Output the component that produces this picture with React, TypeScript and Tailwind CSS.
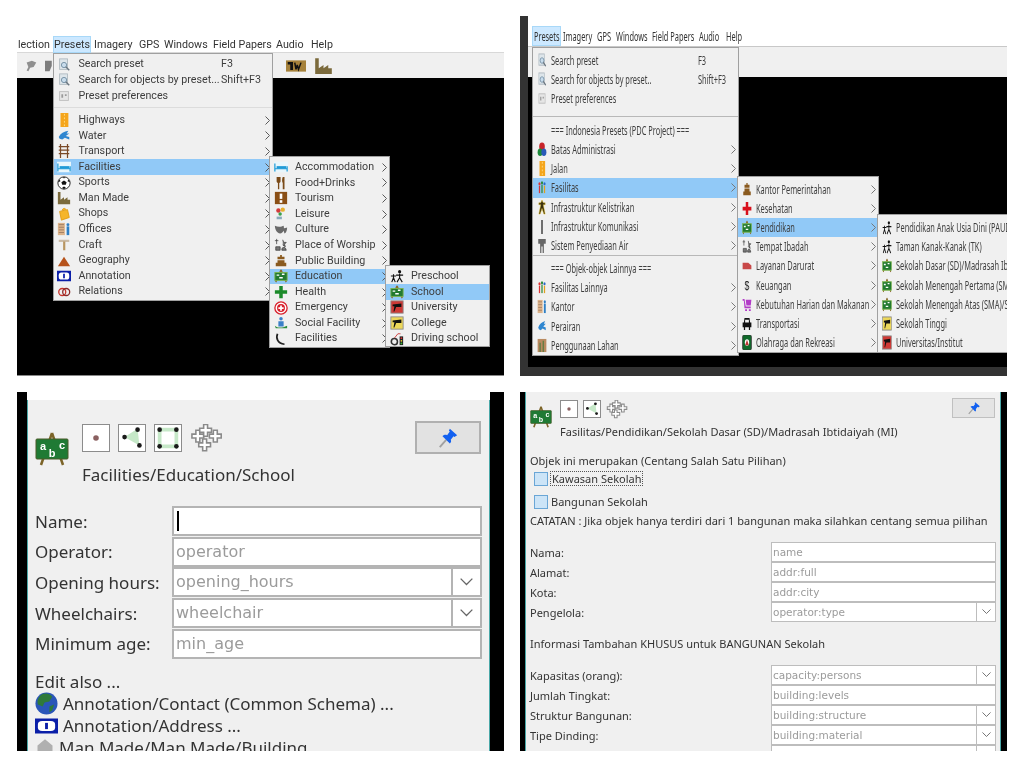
import React from "react";

const B = "#1a1a1a";
const G: Record<string, React.ReactNode> = {
  search: (<g><rect x="3" y="1" width="9" height="12" fill="#dde5ea" stroke="#aeb8bf" /><circle cx="8" cy="8" r="3" fill="#c8dcec" stroke="#6f8ba0" /><path d="M10 10l4 4" stroke="#6b7680" strokeWidth="1.6" /></g>),
  pref: (<g><rect x="3" y="3" width="10" height="10" fill="#e6e6e6" stroke="#bcbcbc" /><path d="M5 6h2v4H5zM9 6h2v2H9z" fill="#9a9a9a" /></g>),
  highway: (<g><rect x="4" y="0" width="9" height="16" fill="#f5a51c" /><path d="M8.5 1v14" stroke="#ffe08a" strokeDasharray="2 2" /></g>),
  water: (<path d="M2 9C4 5 8 3 13 2l-2 3 3 0-4 3 4 1v3l-5-2-3 2-3-1z" fill="#2f86d0" />),
  transport: (<path d="M4 0v16M12 0v16M2 3h12M2 7h12M2 11h12" stroke="#7a4a28" strokeWidth="1.4" fill="none" />),
  bed: (<g><rect x="0" y="2" width="16" height="12" fill="#e8f6fc" /><path d="M1 4v9M15 7v6M1 10h14" stroke="#1f9ad6" strokeWidth="1.4" /><rect x="3" y="7" width="11" height="3" fill="#1f9ad6" /></g>),
  soccer: (<g><circle cx="8" cy="8" r="7" fill="#fff" stroke="#111" /><path d="M8 5l3 2-1 3H6L5 7zM1 7l2-3 1 2zM15 7l-2-3-1 2zM6 13l2 2 2-2-2-1zM7 1h2l-1 2z" fill="#111" /></g>),
  factory: (<path d="M1 1h3v9l4-3v3l4-3v3h3v5H1z" fill="#7b6a3c" />),
  shop: (<path d="M3 5l9-2 2 9-9 3zM6 4c0-3 4-3 4-1" fill="#f5b52a" stroke="#e09a10" />),
  offices: (<g><rect x="1" y="1" width="8" height="14" fill="#dcb38a" /><path d="M2 3h6M2 6h6M2 9h6M2 12h6" stroke="#9d7a60" /><circle cx="12.500" cy="3" r="1.700" fill="#2e7fc4" /><rect x="11" y="5" width="3" height="10" fill="#2e7fc4" /></g>),
  craft: (<g><rect x="2" y="2" width="12" height="2.500" fill="#c9b9a4" /><rect x="7" y="4" width="2.500" height="10" fill="#b89560" /></g>),
  triangle: (<polygon points="8,3 15,14 1,14" fill="#b6521a" />),
  annotation: (<g><rect x="0" y="2" width="16" height="12" fill="#0b1fa8" /><rect x="2" y="4" width="12" height="8" rx="3" fill="#fff" /><path d="M7 5.500h2v5H7z" fill="#0b1fa8" /></g>),
  relations: (<g><circle cx="6" cy="8" r="4" fill="none" stroke="#c8342a" strokeWidth="1.500" /><circle cx="10.500" cy="8" r="4" fill="none" stroke="#8a2a2a" strokeWidth="1.500" /></g>),
  fork: (<path d="M3 1v5c0 1 1 2 1.500 2v7h1.500V8c.5 0 1.500-1 1.500-2V1M10 1c-1 2-1 6 0 7v7h2V1z" fill="#7a4a18" />),
  tourism: (<g><rect x="1" y="1" width="14" height="14" fill="#8a4f16" /><rect x="6.500" y="3" width="3" height="6" fill="#fff" /><rect x="6.500" y="10.500" width="3" height="3" fill="#fff" /></g>),
  leisure: (<g><circle cx="5" cy="4" r="2.500" fill="#d23b3b" /><circle cx="10" cy="3" r="2.500" fill="#e8b030" /><circle cx="7" cy="8" r="2" fill="#39a04a" /><rect x="3" y="11" width="6" height="3" fill="#8ab" /></g>),
  culture: (<path d="M1 3c4 2 8 1 10 0 1 4 0 8-4 9C3 11 1 7 1 3zM10 6c2 0 4-1 5-1 0 3-1 6-3 7" fill="#6a6a6a" />),
  worship: (<path d="M3 1v6M1 3h4M10 2l1 3h3l-2 2 1 3-3-2M2 10h5v4H2zM9 12c2-2 4-2 5 2H9z" stroke="#333" fill="#777" strokeWidth="0.800" />),
  publicb: (<path d="M7 1h2v2h3v3H4V3h3zM4 7h8v3h2v4H2v-4h2z" fill="#8a5a1e" />),
  school: (<g><path d="M8 1L2 15M8 1l6 14" stroke="#8a6a2a" strokeWidth="1.500" /><rect x="1" y="4" width="14" height="9" fill="#227a30" stroke="#7bb34a" /><path d="M3 7h3M9 6h3M6 10h4" stroke="#fff" strokeWidth="1.500" /></g>),
  health: (<path d="M6 1h4v5h5v4h-5v5H6v-5H1V6h5z" fill="#1b8a2a" />),
  redcross: (<path d="M6 1h4v5h5v4h-5v5H6v-5H1V6h5z" fill="#d8101c" />),
  emergency: (<g><circle cx="8" cy="8" r="7" fill="#fff" stroke="#d8202c" strokeWidth="1.500" /><circle cx="8" cy="8" r="4.500" fill="#d8202c" /><path d="M7 5h2v2h2v2H9v2H7V9H5V7h2z" fill="#fff" /></g>),
  social: (<g><circle cx="8" cy="3" r="2" fill="#3a80c8" /><path d="M5 6h6v6H5z" fill="#3a80c8" /><path d="M1 11c3 3 8 3 14 0v3H2z" fill="#2a8a3a" /></g>),
  phone: (<path d="M4 2c-2 5 0 11 8 12" stroke="#222" strokeWidth="2" fill="none" />),
  preschool: (<g><circle cx="11" cy="3" r="1.800" fill="#111" /><path d="M11 5v5M11 10l-3 5M11 10l3 5M7 7h8M4 6v4M4 10l-2 5M4 10l2 5M1 8h6" stroke="#111" strokeWidth="1.300" fill="none" /></g>),
  university: (<g><rect x="1" y="1" width="14" height="14" fill="#cf3a36" stroke="#888" /><path d="M3 5l10-1v4H7l-2 5H4l1-6H3z" fill="#111" /></g>),
  college: (<g><rect x="1" y="1" width="14" height="14" fill="#ecd75a" stroke="#888" /><path d="M3 5l10-1v4H7l-2 5H4l1-6H3z" fill="#111" /></g>),
  driving: (<g><circle cx="5" cy="11" r="3.500" fill="none" stroke="#333" strokeWidth="1.800" /><rect x="11" y="5" width="4" height="10" fill="#222" /><circle cx="13" cy="7" r="1" fill="#d33" /><circle cx="13" cy="10" r="1" fill="#ec3" /><circle cx="13" cy="13" r="1" fill="#3b3" /><path d="M5 7l4-5h3" stroke="#c33" fill="none" /></g>),
  batas: (<g><circle cx="8" cy="5" r="4.500" fill="#c8242a" /><circle cx="5" cy="11" r="4" fill="#1d8a3a" /><circle cx="11" cy="11" r="4" fill="#2a5ab8" /></g>),
  people: (<g><circle cx="4" cy="4" r="1.700" fill="#d33" /><rect x="3" y="6" width="2" height="8" fill="#d33" /><circle cx="8" cy="3" r="1.700" fill="#2a8a3a" /><rect x="7" y="5" width="2" height="9" fill="#2a8a3a" /><circle cx="12" cy="4" r="1.700" fill="#2a6ac8" /><rect x="11" y="6" width="2" height="8" fill="#e0a020" /></g>),
  power: (<path d="M8 0l2 3h3v2h-3l3 10h-2L8 9l-3 6H3L6 5H3V3h3z" fill="#3a3010" stroke="#e8c020" strokeWidth="0.600" />),
  comm: (<path d="M7 1h2v15H7z" fill="#222" />),
  tower: (<path d="M2 1h12v5h-3v10H9V9H7v7H5V6H2z" fill="#666" />),
  land: (<g><rect x="1" y="1" width="14" height="14" fill="#b98a60" /><path d="M4 5h2v10H4zM9 3h2v12H9z" fill="#5a7a40" /></g>),
  layanan: (<path d="M1 5h9l5 3v4H1z" fill="#c84848" />),
  dollar: (<text x="8" y="13" textAnchor="middle" fontSize="14" fill="#222" fontFamily="Liberation Sans">$</text>),
  cart: (<path d="M1 2h3l2 8h8v2H4L3 4H1zM6 3h9l-1 6H7zM5 13h3v2H5zM11 13h3v2h-3z" fill="#b23bc8" />),
  car: (<path d="M4 2h8l1 5h2v5h-2v3h-2v-3H5v3H3v-3H1V7h2zM5 4v3h6V4z" fill="#111" />),
  sport: (<g><rect x="1" y="0" width="14" height="16" rx="2" fill="#0f6a2a" stroke="#333" /><circle cx="8" cy="8" r="3.500" fill="#fff" /><path d="M8 5l3 6H5z" fill="#b33" /></g>),
  gray1: (<path d="M3 4l6-2 5 2-3 5-4 1-2 4-2-1 2-4z" fill="#8f8f8f" />),
  gray2: (<path d="M4 2h9v6l-3 6H4z" fill="#7d7d7d" />),
  tw: (<g><rect x="0" y="3" width="16" height="10" fill="#a5813b" /><path d="M2 5h3v6H4V6H2zM7 5l1 6 1-4 1 4 2-6" stroke="#111" strokeWidth="1.200" fill="none" /></g>),
};

function Ico({ n, w = 16, h = 16 }: { n: string; w?: number; h?: number }) {
  return (
    <svg viewBox="0 0 16 16" width={w} height={h} preserveAspectRatio="none" className="shrink-0">
      {G[n]}
    </svg>
  );
}

function Chevron({ color = "#5a5a5a" }: { color?: string }) {
  return (
    <svg width="5" height="9" viewBox="0 0 5 9" className="shrink-0">
      <path d="M.5.5l4 4-4 4" stroke={color} fill="none" />
    </svg>
  );
}

type Row = { i?: string; t: string; s?: string; a?: boolean; on?: boolean; sep?: boolean };

function MenuA({ rows }: { rows: Row[] }) {
  return (
    <>
      {rows.map((r, k) =>
        r.sep ? (
          <div key={k} className="h-[8.7px] pt-[3.5px]">
            <div className="h-px bg-[#dcdcdc]" />
          </div>
        ) : (
          <div key={k} className={`flex h-[15.6px] items-center pr-[2px] ${r.on ? "bg-[#91c9f7]" : ""}`}>
            <div className="flex w-[25px] shrink-0 justify-center pr-[4px]">{r.i && <Ico n={r.i} w={14} h={14} />}</div>
            <span className="min-w-0 flex-1 whitespace-nowrap">{r.t}</span>
            {r.s && <span className="w-[49px] shrink-0">{r.s}</span>}
            {r.a && <Chevron />}
          </div>
        )
      )}
    </>
  );
}

function MenuB({ rows, h }: { rows: Row[]; h: string }) {
  return (
    <>
      {rows.map((r, k) =>
        r.sep ? (
          <div key={k} className={r.t === "s" ? "h-[3px]" : "h-[12px] pt-[8px]"}>
            <div className="h-px bg-[#b8b8b8]" />
          </div>
        ) : (
          <div key={k} className={`flex ${h} items-center pr-[2px] ${r.on ? "bg-[#91c9f7]" : ""}`}>
            <div className="flex w-[18px] shrink-0 justify-center">{r.i && <Ico n={r.i} w={10} h={15} />}</div>
            <span className="min-w-0 flex-1 whitespace-nowrap"><span className="inline-block origin-left scale-x-[0.57]">{r.t}</span></span>
            {r.s && <span className="w-[38px] shrink-0"><span className="inline-block origin-left scale-x-[0.57] whitespace-nowrap">{r.s}</span></span>}
            {r.a && <Chevron color="#777" />}
          </div>
        )
      )}
    </>
  );
}

const panelMenu = "absolute border border-[#a0a0a0] bg-[#f0f0f0] leading-none text-[#3d3d3d]";

function TopLeft() {
  const bar = [["Imagery", "w-[39px] ml-[3px]"], ["GPS", "w-[19px] ml-[6px]"], ["Windows", "w-[43px] ml-[6px]"], ["Field Papers", "w-[57px] ml-[6px]"], ["Audio", "w-[29px] ml-[6px]"], ["Help", "w-[24px] ml-[6px]"]];
  return (
    <div className="relative flex h-[340px] w-[487px] flex-col overflow-hidden font-['Roboto',sans-serif] text-[10.7px]">
      <div className="flex h-[17px] shrink-0 items-center border-b border-[#d8d8d8] text-[#333]">
        <span className="w-[36px] pl-px pt-[3px]">lection</span>
        <span className="flex h-[17px] w-[38px] items-center justify-center border border-[#a8d8f8] bg-[#cce8ff] pt-[3px]">Presets</span>
        {bar.map(([t, w]) => (
          <span key={t} className={`whitespace-nowrap pt-[3px] ${w}`}>{t}</span>
        ))}
      </div>
      <div className="flex h-[25px] shrink-0 items-center gap-[4px] bg-[#f0f0f0] pl-[7px]">
        <Ico n="gray1" w={14} h={14} />
        <Ico n="gray2" w={12} h={14} />
        <div className="ml-[228px]"><Ico n="tw" w={20} h={18} /></div>
        <div className="ml-[4px]"><Ico n="factory" w={19} h={18} /></div>
      </div>
      <div className="flex-1 border-b border-[#888] bg-black" />

      <div className={`${panelMenu} left-[35.5px] top-[17px] w-[220.5px] pt-[3px]`}>
        <MenuA
          rows={[
            { i: "search", t: "Search preset", s: "F3" },
            { i: "search", t: "Search for objects by preset...", s: "Shift+F3" },
            { i: "pref", t: "Preset preferences" },
            { sep: true, t: "" },
            { i: "highway", t: "Highways", a: true },
            { i: "water", t: "Water", a: true },
            { i: "transport", t: "Transport", a: true },
            { i: "bed", t: "Facilities", a: true, on: true },
            { i: "soccer", t: "Sports", a: true },
            { i: "factory", t: "Man Made", a: true },
            { i: "shop", t: "Shops", a: true },
            { i: "offices", t: "Offices", a: true },
            { i: "craft", t: "Craft", a: true },
            { i: "triangle", t: "Geography", a: true },
            { i: "annotation", t: "Annotation", a: true },
            { i: "relations", t: "Relations", a: true },
          ]}
        />
      </div>
      <div className={`${panelMenu} left-[252px] top-[120px] w-[121px] pt-[2.5px]`}>
        <MenuA
          rows={[
            { i: "bed", t: "Accommodation", a: true },
            { i: "fork", t: "Food+Drinks", a: true },
            { i: "tourism", t: "Tourism", a: true },
            { i: "leisure", t: "Leisure", a: true },
            { i: "culture", t: "Culture", a: true },
            { i: "worship", t: "Place of Worship", a: true },
            { i: "publicb", t: "Public Building", a: true },
            { i: "school", t: "Education", a: true, on: true },
            { i: "health", t: "Health", a: true },
            { i: "emergency", t: "Emergency", a: true },
            { i: "social", t: "Social Facility", a: true },
            { i: "phone", t: "Facilities", a: true },
          ]}
        />
      </div>
      <div className={`${panelMenu} left-[368px] top-[229px] w-[105px] pt-[2.5px]`}>
        <MenuA
          rows={[
            { i: "preschool", t: "Preschool" },
            { i: "school", t: "School", on: true },
            { i: "university", t: "University" },
            { i: "college", t: "College" },
            { i: "driving", t: "Driving school" },
          ]}
        />
      </div>
    </div>
  );
}

function TopRight() {
  const bar = [["Presets", "w-[29px]"], ["Imagery", "w-[34px]"], ["GPS", "w-[19px]"], ["Windows", "w-[36px]"], ["Field Papers", "w-[47px]"], ["Audio", "w-[27px]"], ["Help", "w-[20px]"]];
  return (
    <div className="relative flex h-[360px] w-[487px] overflow-hidden font-['Noto_Sans',sans-serif] text-[13px]">
      <div className="w-[8px] shrink-0 bg-[#333]" />
      <div className="flex min-w-0 flex-1 flex-col">
        <div className="h-[10px] shrink-0" />
        <div className="flex h-[21px] shrink-0 items-center border-b border-[#c8c8c8] pl-[4px] text-[#333]">
          {bar.map(([t, w], k) => (
            <span key={t} className={`flex h-full items-center pt-[2px] ${w} ${k === 0 ? "border border-[#a8d8f8] bg-[#cce8ff] pl-[1px]" : "pl-[2px]"}`}>
              <span className="inline-block origin-left scale-x-[0.57] whitespace-nowrap">{t}</span>
            </span>
          ))}
        </div>
        <div className="h-[30px] shrink-0 bg-[#f0f0f0]" />
        <div className="flex-1 bg-black" />
        <div className="h-[9px] shrink-0 bg-[#333]" />
      </div>

      <div className={`${panelMenu} left-[12px] top-[31px] w-[207px] pt-[2.5px]`}>
        <MenuB
          h="h-[19.3px]"
          rows={[
            { i: "search", t: "Search preset", s: "F3" },
            { i: "search", t: "Search for objects by preset..", s: "Shift+F3" },
            { i: "pref", t: "Preset preferences" },
            { sep: true, t: "" },
            { t: "=== Indonesia Presets (PDC Project) ===" },
            { i: "batas", t: "Batas Administrasi", a: true },
            { i: "highway", t: "Jalan", a: true },
            { i: "people", t: "Fasilitas", a: true, on: true },
            { i: "power", t: "Infrastruktur Kelistrikan", a: true },
            { i: "comm", t: "Infrastruktur Komunikasi", a: true },
            { i: "tower", t: "Sistem Penyediaan Air", a: true },
            { sep: true, t: "s" },
            { t: "=== Objek-objek Lainnya ===" },
            { i: "people", t: "Fasilitas Lainnya", a: true },
            { i: "offices", t: "Kantor", a: true },
            { i: "water", t: "Perairan", a: true },
            { i: "land", t: "Penggunaan Lahan", a: true },
          ]}
        />
      </div>
      <div className={`${panelMenu} left-[217px] top-[160px] w-[142px] pt-[3px]`}>
        <MenuB
          h="h-[19.1px]"
          rows={[
            { i: "publicb", t: "Kantor Pemerintahan", a: true },
            { i: "redcross", t: "Kesehatan", a: true },
            { i: "school", t: "Pendidikan", a: true, on: true },
            { i: "worship", t: "Tempat Ibadah", a: true },
            { i: "layanan", t: "Layanan Darurat", a: true },
            { i: "dollar", t: "Keuangan", a: true },
            { i: "cart", t: "Kebutuhan Harian dan Makanan", a: true },
            { i: "car", t: "Transportasi", a: true },
            { i: "sport", t: "Olahraga dan Rekreasi", a: true },
          ]}
        />
      </div>
      <div className={`${panelMenu} left-[357px] top-[198px] w-[180px] pt-[3px]`}>
        <MenuB
          h="h-[19.2px]"
          rows={[
            { i: "preschool", t: "Pendidikan Anak Usia Dini (PAUD)" },
            { i: "preschool", t: "Taman Kanak-Kanak (TK)" },
            { i: "school", t: "Sekolah Dasar (SD)/Madrasah Ibtidaiyah (MI)" },
            { i: "school", t: "Sekolah Menengah Pertama (SMP)" },
            { i: "school", t: "Sekolah Menengah Atas (SMA)/SMK" },
            { i: "college", t: "Sekolah Tinggi" },
            { i: "university", t: "Universitas/Institut" },
          ]}
        />
      </div>
    </div>
  );
}

function Easel({ w, h }: { w: number; h: number }) {
  return (
    <svg viewBox="0 0 34 34" width={w} height={h} className="shrink-0">
      <path d="M17 1L6 33M17 1l11 32" stroke="#7c6428" strokeWidth="2.500" />
      <rect x="1" y="7" width="32" height="20" rx="1" fill="#1f7a34" stroke="#4a5a28" />
      <text x="8" y="18" fontSize="11" fontWeight="700" fill="#fff" textAnchor="middle" fontFamily="Liberation Sans">a</text>
      <text x="17" y="25" fontSize="11" fontWeight="700" fill="#fff" textAnchor="middle" fontFamily="Liberation Sans">b</text>
      <text x="27" y="17" fontSize="11" fontWeight="700" fill="#fff" textAnchor="middle" fontFamily="Liberation Sans">c</text>
    </svg>
  );
}

function NodeBox({ s }: { s: string }) {
  return (
    <div className={`flex ${s} shrink-0 items-center justify-center border border-[#8c8c8c] bg-white`}>
      <svg viewBox="0 0 28 28" className="h-full w-full"><circle cx="14" cy="14" r="3" fill="#8a6060" /></svg>
    </div>
  );
}
function WayBox({ s }: { s: string }) {
  return (
    <div className={`${s} shrink-0 border border-[#8c8c8c] bg-white`}>
      <svg viewBox="0 0 28 28" className="h-full w-full">
        <polygon points="6,13 20,4 22,22" fill="#c6e8c8" />
        <circle cx="6" cy="13" r="2.500" fill={B} /><circle cx="20" cy="5" r="2.500" fill={B} /><circle cx="22" cy="22" r="2.500" fill={B} />
      </svg>
    </div>
  );
}
function AreaBox({ s }: { s: string }) {
  return (
    <div className={`${s} shrink-0 border border-[#8c8c8c] bg-white`}>
      <svg viewBox="0 0 28 28" className="h-full w-full">
        <rect x="5" y="5" width="18" height="18" fill="none" stroke="#c6e8c8" strokeWidth="4" />
        <circle cx="5" cy="5" r="2.500" fill={B} /><circle cx="23" cy="5" r="2.500" fill={B} /><circle cx="5" cy="23" r="2.500" fill={B} /><circle cx="23" cy="23" r="2.500" fill={B} />
      </svg>
    </div>
  );
}
function RelIcon({ w, h }: { w: number; h: number }) {
  const p = "M0 0h3v-3h3v3h3v3H6v3H3V3H0z";
  return (
    <svg viewBox="0 0 34 30" width={w} height={h} className="shrink-0">
      <g fill="#fff" stroke="#8a8a8a" strokeWidth="1.200">
        <path d={p} transform="translate(2 10) scale(1.350)" />
        <path d={p} transform="translate(10 4) scale(1.350)" />
        <path d={p} transform="translate(20 10) scale(1.350)" />
        <path d={p} transform="translate(9 19) scale(1.350)" />
      </g>
    </svg>
  );
}
function Pin({ s }: { s: number }) {
  return (
    <svg viewBox="0 0 24 24" width={s} height={s}>
      <path d="M3 22l7-8" stroke="#a0a0a0" strokeWidth="2" />
      <path d="M14 2l8 7-3 2-1-1-3 4c1 2 0 3-1 4L6 10c1-1 3-2 5-1l3-4-1-1z" fill="#1260f0" />
    </svg>
  );
}

function Globe() {
  return (
    <svg viewBox="0 0 24 24" width="23" height="23" className="shrink-0">
      <circle cx="12" cy="12" r="11.500" fill="#2a56b8" />
      <path d="M6 3c4-2 9-2 12 2l-3 5-5 1-2 4-5-2c-1-4 0-7 3-10zM15 15l5-2-2 6-3 2z" fill="#2f7a3a" />
    </svg>
  );
}

function Chev({ w = 12, c = "#666" }: { w?: number; c?: string }) {
  return (
    <svg width={w} height={w * 0.6} viewBox="0 0 10 6">
      <path d="M.5.5L5 5l4.500-4.500" stroke={c} fill="none" />
    </svg>
  );
}

function BigField({ label, ph, combo, cursor }: { label: string; ph?: string; combo?: boolean; cursor?: boolean }) {
  return (
    <>
      <div className="flex items-center text-[#333]">{label}</div>
      <div className="flex h-[30px] border-2 border-[#b4b4b4] bg-white font-['DejaVu_Sans',sans-serif] text-[16px] text-[#9b9b9b]">
        <div className="flex min-w-0 flex-1 items-center px-[2px]">
          {cursor ? <div className="ml-[1px] h-[20px] w-[2px] bg-black" /> : ph}
        </div>
        {combo && (
          <div className="flex w-[29px] items-center justify-center border-l-2 border-[#b4b4b4]"><Chev w={13} /></div>
        )}
      </div>
    </>
  );
}

function BottomLeft() {
  return (
    <div className="flex h-[359px] w-[487px] overflow-hidden font-['Noto_Sans',sans-serif]">
      <div className="w-[10px] shrink-0 bg-black" />
      <div className="flex min-w-0 flex-1 flex-col">
        <div className="h-[8px] shrink-0 bg-white" />
        <div className="flex-1 border-x border-[#4aa8a8] bg-[#f0f0f0] pl-[7px] pr-[8px] text-[17px] leading-none">
          <div className="flex pt-[21px]">
            <div className="mt-[11px]"><Easel w={34} h={34} /></div>
            <div className="ml-[13px] flex flex-col">
              <div className="mt-[3px] flex items-start gap-[8px]">
                <NodeBox s="h-[28px] w-[28px]" />
                <WayBox s="h-[28px] w-[28px]" />
                <AreaBox s="h-[28px] w-[28px]" />
                <RelIcon w={33} h={30} />
              </div>
              <div className="mt-[12px] h-[20px] whitespace-nowrap text-[#333]">Facilities/Education/School</div>
            </div>
            <div className="ml-auto flex h-[33px] w-[66px] items-center justify-center border-2 border-[#b0b0b0] bg-[#e2e2e2]"><Pin s={22} /></div>
          </div>
          <div className="mt-[20px] grid grid-cols-[137px_310px] gap-y-[0.7px]">
            <BigField label="Name:" cursor />
            <BigField label="Operator:" ph="operator" />
            <BigField label="Opening hours:" ph="opening_hours" combo />
            <BigField label="Wheelchairs:" ph="wheelchair" combo />
            <BigField label="Minimum age:" ph="min_age" />
          </div>
          <div className="mt-[14px] text-[#333]">Edit also ...</div>
          <div className="mt-[3px] flex h-[22px] items-center gap-[5px] text-[#333]"><Globe /><span>Annotation/Contact (Common Schema) ...</span></div>
          <div className="flex h-[22px] items-center gap-[5px] text-[#333]"><Ico n="annotation" w={23} h={20} /><span>Annotation/Address ...</span></div>
          <div className="flex h-[22px] items-center gap-[4px] text-[#333]">
            <svg viewBox="0 0 16 16" width="20" height="20" className="shrink-0"><path d="M8 1l6 5v9H2V6z" fill="#b0b0b0" /></svg>
            <span>Man Made/Man Made/Building ...</span>
          </div>
        </div>
      </div>
      <div className="w-[14px] shrink-0 bg-black" />
    </div>
  );
}

function SmallField({ label, ph, combo, h = "h-[20px]" }: { label: string; ph?: string; combo?: boolean; h?: string }) {
  return (
    <>
      <div className="flex items-center">{label}</div>
      <div className={`flex ${h} border border-[#bdbdbd] bg-white font-['DejaVu_Sans',sans-serif] text-[10.5px] text-[#9b9b9b]`}>
        <div className="flex min-w-0 flex-1 items-center px-[1px]">{ph}</div>
        {combo && <div className="flex w-[19px] items-center justify-center border-l border-[#bdbdbd]"><Chev w={9} /></div>}
      </div>
    </>
  );
}

function BottomRight() {
  return (
    <div className="flex h-[359px] w-[487px] overflow-hidden font-['Noto_Sans',sans-serif]">
      <div className="w-[5px] shrink-0 bg-black" />
      <div className="min-w-0 flex-1 border-x border-[#4aa8a8] bg-[#f0f0f0] pl-[4px] pr-[4px] text-[11px] leading-none text-[#333]">
        <div className="flex pt-[6px]">
          <div className="mt-[8px]"><Easel w={22} h={22} /></div>
          <div className="ml-[8px] flex flex-col">
            <div className="mt-[2px] flex items-start gap-[5px]">
              <NodeBox s="h-[18px] w-[18px]" />
              <WayBox s="h-[18px] w-[18px]" />
              <RelIcon w={22} h={20} />
            </div>
            <div className="mt-[6px] whitespace-nowrap">Fasilitas/Pendidikan/Sekolah Dasar (SD)/Madrasah Ibtidaiyah (MI)</div>
          </div>
          <div className="ml-auto mr-[1px] flex h-[20px] w-[43px] items-center justify-center border border-[#c0c0c0] bg-[#e4e4e4]"><Pin s={14} /></div>
        </div>
        <div className="mt-[18px]">Objek ini merupakan (Centang Salah Satu Pilihan)</div>
        <div className="mt-[5px] flex h-[15px] items-center pl-[4px]">
          <div className="h-[14px] w-[14px] border border-[#6aa6d6] bg-[#cce4f7]" />
          <span className="ml-[2px] border border-dotted border-[#555] px-[1px] py-[1px]">Kawasan Sekolah</span>
        </div>
        <div className="mt-[8px] flex h-[15px] items-center pl-[4px]">
          <div className="h-[14px] w-[14px] border border-[#6aa6d6] bg-[#cce4f7]" />
          <span className="ml-[3px]">Bangunan Sekolah</span>
        </div>
        <div className="mt-[6px] whitespace-nowrap">CATATAN : Jika objek hanya terdiri dari 1 bangunan maka silahkan centang semua pilihan</div>
        <div className="mt-[16px] grid grid-cols-[241px_225px]">
          <SmallField label="Nama:" ph="name" />
          <SmallField label="Alamat:" ph="addr:full" />
          <SmallField label="Kota:" ph="addr:city" />
          <SmallField label="Pengelola:" ph="operator:type" combo />
        </div>
        <div className="mt-[16px]">Informasi Tambahan KHUSUS untuk BANGUNAN Sekolah</div>
        <div className="mt-[16px] grid grid-cols-[241px_225px]">
          <SmallField label="Kapasitas (orang):" ph="capacity:persons" combo />
          <SmallField label="Jumlah Tingkat:" ph="building:levels" />
          <SmallField label="Struktur Bangunan:" ph="building:structure" combo />
          <SmallField label="Tipe Dinding:" ph="building:material" combo />
          <SmallField label="" ph="building:floor" combo />
        </div>
      </div>
      <div className="w-[6px] shrink-0 bg-black" />
    </div>
  );
}

export default function App() {
  return (
    <div className="h-[767px] w-[1023px] overflow-hidden bg-white blur-[0.3px]">
      <div className="flex h-[376px] items-end gap-[16px] pl-[17px]">
        <TopLeft />
        <TopRight />
      </div>
      <div className="mt-[16px] flex gap-[16px] pl-[17px]">
        <BottomLeft />
        <BottomRight />
      </div>
    </div>
  );
}
